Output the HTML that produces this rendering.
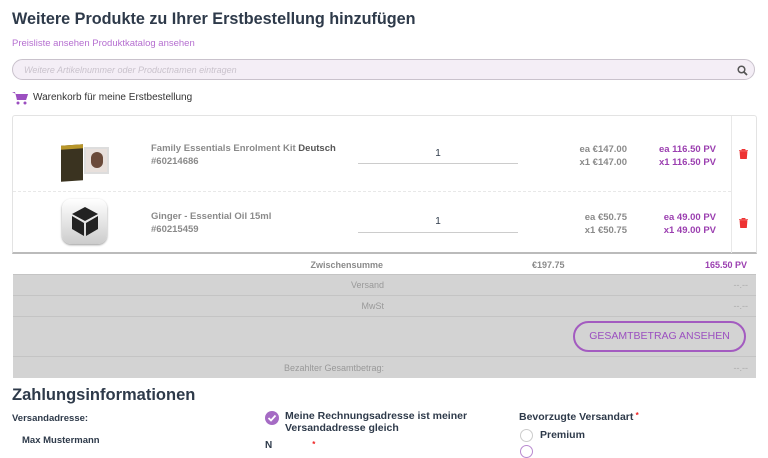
<!DOCTYPE html>
<html><head><meta charset="utf-8"><style>
*{box-sizing:border-box;margin:0;padding:0}
body{width:768px;height:447px;overflow:hidden;background:#fff;font-family:"Liberation Sans",sans-serif;position:relative;color:#2e3a4a}
.a{position:absolute;white-space:nowrap}
.g{color:#8a8a8a;font-weight:bold;font-size:9.5px}
.p{color:#9b3fb0;font-weight:bold;font-size:9.5px}
.grey{position:absolute;left:13px;width:743px;background:#d3d3d3;border-top:1px solid #c4c4c4}
.lbl{color:#999;font-size:9px;right:385px;position:absolute}
.dash{color:#aaa;font-size:9px;right:22px;position:absolute}
</style></head><body>
<div class="a" style="left:12px;top:10px;font-size:16.2px;font-weight:bold;color:#2e3a4a">Weitere Produkte zu Ihrer Erstbestellung hinzufügen</div>
<div class="a" style="left:12px;top:38px;font-size:9.5px;color:#b56fd0">Preisliste ansehen Produktkatalog ansehen</div>
<div class="a" style="left:12px;top:59px;width:743px;height:21px;border:1px solid #c9c2cc;border-radius:11px;background:#f4eef6"></div>
<div class="a" style="left:24px;top:65px;font-size:9px;font-style:italic;color:#c9c2cc">Weitere Artikelnummer oder Productnamen eintragen</div>
<svg class="a" style="left:737px;top:65px" width="11" height="11" viewBox="0 0 11 11"><circle cx="4.5" cy="4.5" r="3.3" fill="none" stroke="#555" stroke-width="1.5"/><path d="M7 7l3 3" stroke="#555" stroke-width="1.8"/></svg>
<svg class="a" style="left:12px;top:91px" width="16" height="14" viewBox="0 0 16 14"><path d="M0 1h3l2 8h9l2-6H4" fill="#9b4fc0"/><path d="M4 3h12l-2 6H5z" fill="#9b4fc0"/><circle cx="6" cy="12" r="1.5" fill="#9b4fc0"/><circle cx="13" cy="12" r="1.5" fill="#9b4fc0"/></svg>
<div class="a" style="left:33px;top:92px;font-size:10px;color:#333">Warenkorb für meine Erstbestellung</div>

<div class="a" style="left:12px;top:115px;width:745px;height:139px;border:1px solid #e3e3e3;border-bottom:2px solid #bbb;border-radius:3px 3px 0 0"></div>
<div class="a" style="left:13px;top:191px;width:718px;border-top:1px dashed #e8e8e8"></div>
<div class="a" style="left:731px;top:116px;height:137px;border-left:1px solid #e8e8e8"></div>
<div class="a" style="left:61px;top:145px;width:22px;height:36px;background:#3a3320;border-top:4px solid #b8962a;transform:skewY(-4deg)"></div>
<div class="a" style="left:84px;top:147px;width:25px;height:27px;background:#e8e0dc;border:2px solid #ddd"><div style="margin:3px auto;width:12px;height:16px;border-radius:6px;background:#6a4a3a"></div></div>
<div class="a" style="left:62px;top:199px;width:45px;height:45px;border-radius:9px;background:linear-gradient(#fff,#ccc);box-shadow:0 1px 2px #999"></div>
<svg class="a" style="left:70px;top:205px" width="30" height="32" viewBox="0 0 30 32"><path d="M15 2L28 9 15 16 2 9z" fill="#222"/><path d="M2 11l12 7v13L2 24z" fill="#222"/><path d="M28 11l-12 7v13l12-7z" fill="#222"/></svg>

<div class="a g" style="left:151px;top:143px">Family Essentials Enrolment Kit <span style="color:#555">Deutsch</span></div>
<div class="a g" style="left:151px;top:156px">#60214686</div>
<div class="a g" style="left:151px;top:211px">Ginger - Essential Oil 15ml</div>
<div class="a g" style="left:151px;top:224px">#60215459</div>
<div class="a" style="left:358px;top:148px;width:160px;height:16px;border-bottom:1px solid #ccc;text-align:center;font-size:10px;color:#2e3a4a">1</div>
<div class="a" style="left:358px;top:216px;width:160px;height:17px;border-bottom:1px solid #ccc;text-align:center;font-size:10px;color:#2e3a4a">1</div>
<div class="a g" style="right:141px;top:143px;text-align:right;line-height:13px">ea €147.00<br>x1 €147.00</div>
<div class="a g" style="right:141px;top:211px;text-align:right;line-height:13px">ea €50.75<br>x1 €50.75</div>
<div class="a p" style="right:52px;top:143px;text-align:right;line-height:13px">ea 116.50 PV<br>x1 116.50 PV</div>
<div class="a p" style="right:52px;top:211px;text-align:right;line-height:13px">ea 49.00 PV<br>x1 49.00 PV</div>
<svg class="a" style="left:739px;top:149px" width="9" height="10" viewBox="0 0 9 10"><path d="M0 1.5h9M3 1.5V0h3v1.5M1 2.5h7l-.6 7.5H1.6z" fill="#e33" stroke="#e33" stroke-width=".8"/></svg>
<svg class="a" style="left:739px;top:218px" width="9" height="10" viewBox="0 0 9 10"><path d="M0 1.5h9M3 1.5V0h3v1.5M1 2.5h7l-.6 7.5H1.6z" fill="#e33" stroke="#e33" stroke-width=".8"/></svg>

<div class="a g" style="right:385px;top:260px;font-size:9px">Zwischensumme</div>
<div class="a g" style="left:532px;top:260px;font-size:9px">€197.75</div>
<div class="a p" style="right:21px;top:260px;font-size:9px">165.50 PV</div>

<div class="grey" style="top:274px;height:21px"><span class="lbl" style="top:5px;right:372px">Versand</span><span class="dash" style="top:5px;right:8px">--.--</span></div>
<div class="grey" style="top:295px;height:21px"><span class="lbl" style="top:5px;right:372px">MwSt</span><span class="dash" style="top:5px;right:8px">--.--</span></div>
<div class="grey" style="top:316px;height:40px"><div style="position:absolute;left:560px;top:4px;width:173px;height:31px;border:2px solid #a35bc0;border-radius:16px;color:#9b4fc0;font-size:10.5px;text-align:center;line-height:27px">GESAMTBETRAG ANSEHEN</div></div>
<div class="grey" style="top:356px;height:22px"><span class="lbl" style="top:6px;right:372px">Bezahlter Gesamtbetrag:</span><span class="dash" style="top:6px;right:8px">--.--</span></div>

<div class="a" style="left:12px;top:386px;font-size:16.5px;font-weight:bold">Zahlungsinformationen</div>
<div class="a" style="left:12px;top:413px;font-size:9.5px;font-weight:bold">Versandadresse:</div>
<div class="a" style="left:22px;top:435px;font-size:9.5px;font-weight:bold">Max Mustermann</div>
<svg class="a" style="left:265px;top:411px" width="14" height="14" viewBox="0 0 14 14"><circle cx="7" cy="7" r="7" fill="#a56bc4"/><path d="M3.5 7l2.5 2.5 4.5-5" stroke="#fff" stroke-width="1.8" fill="none"/></svg>
<div class="a" style="left:285px;top:410px;font-size:10.5px;font-weight:bold;line-height:12px">Meine Rechnungsadresse ist meiner<br>Versandadresse gleich</div>
<div class="a" style="left:265px;top:440px;font-size:10px;font-weight:bold">N<span style="color:#e22;font-size:8px;vertical-align:top;margin-left:40px">*</span></div>
<div class="a" style="left:519px;top:411px;font-size:10.5px;font-weight:bold">Bevorzugte Versandart<span style="color:#e22;font-size:8px;vertical-align:top"> *</span></div>
<div class="a" style="left:520px;top:429px;width:13px;height:13px;border:1px solid #ccc;border-radius:50%"></div>
<div class="a" style="left:540px;top:429px;font-size:10.5px;font-weight:bold">Premium</div>
<div class="a" style="left:520px;top:445px;width:13px;height:13px;border:1px solid #b98ad0;border-radius:50%"></div>
</body></html>
